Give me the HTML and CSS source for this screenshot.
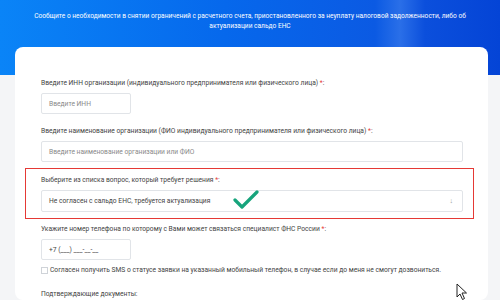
FILE: index.html
```html
<!DOCTYPE html>
<html lang="ru">
<head>
    <meta charset="UTF-8">
    <title>Обращение</title>
    <link rel="stylesheet" href="styles.css">
</head>
<body>
    <div class="hero">
        <p class="hero-text">Сообщите о необходимости в снятии ограничений с расчетного счета, приостановленного за неуплату налоговой задолженности, либо об актуализации сальдо ЕНС</p>
    </div>
    <div class="card">
        <div class="field">
            <label class="label">Введите ИНН организации (индивидуального предпринимателя или физического лица) <span class="req">*</span>:</label>
            <div class="input short placeholder">Введите ИНН</div>
        </div>
        <div class="field">
            <label class="label">Введите наименование организации (ФИО индивидуального предпринимателя или физического лица) <span class="req">*</span>:</label>
            <div class="input placeholder">Введите наименование организации или ФИО</div>
        </div>
        <div class="field highlight">
            <label class="label">Выберите из списка вопрос, который требует решения <span class="req">*</span>:</label>
            <div class="input select">
                <span>Не согласен с сальдо ЕНС, требуется актуализация</span>
                <span class="arrow">↓</span>
                <svg class="check" width="26" height="20" viewBox="0 0 26 20">
                    <path d="M2 10 L9 17 L24 2" fill="none" stroke="#17a47c" stroke-width="3.2" stroke-linecap="round" stroke-linejoin="round"/>
                </svg>
            </div>
        </div>
        <div class="field phone">
            <label class="label">Укажите номер телефона по которому с Вами может связаться специалист ФНС России <span class="req">*</span>:</label>
            <div class="input short">+7 (___) ___-__-__</div>
        </div>
        <div class="agree">
            <span class="box"></span>
            <span>Согласен получить SMS о статусе заявки на указанный мобильный телефон, в случае если до меня не смогут дозвониться.</span>
        </div>
        <div class="label docs">Подтверждающие документы:</div>
        <svg class="cursor" width="12" height="18" viewBox="0 0 12 18">
            <path d="M1 1 L1 14 L4 11 L6.5 16.5 L8.5 15.5 L6 10 L10.5 10 Z" fill="#fff" stroke="#222" stroke-width="1" stroke-linejoin="round"/>
        </svg>
    </div>
</body>
</html>
```

FILE: styles.css
```css
body {
    margin: 0;
    padding: 0;
    font-family: Roboto, "Liberation Sans", sans-serif;
    background-color: #f4f5f7;
    color: #333;
    overflow: hidden;
}

.hero {
    height: 75px;
    background: linear-gradient(90deg, #0a84f7 0%, #0668ec 45%, #0b5ae3 75%, #2a6fe8 80%, #0b4fdc 85%, #0444d6 100%);
    padding-top: 11px;
    box-sizing: border-box;
}

.hero-text {
    margin: 0 auto;
    width: 450px;
    text-align: center;
    color: #fff;
    font-size: 6.6px;
    line-height: 10px;
}

.card {
    position: relative;
    background-color: #fff;
    margin: -28px 12px 0 15px;
    border-radius: 8px;
    padding: 31px 25px 0 26px;
    height: 222px;
}

.field {
    margin-bottom: 12px;
}

.label {
    display: block;
    font-size: 6.7px;
    line-height: 10px;
    color: #444;
    margin-bottom: 5px;
}

.req {
    color: #e53935;
}

.input {
    box-sizing: border-box;
    height: 21px;
    border: 1px solid #e1e4e8;
    border-radius: 2px;
    padding: 0 7px;
    display: flex;
    align-items: center;
    font-size: 6.7px;
    color: #444;
}

.input.short {
    width: 90px;
}

.placeholder {
    color: #8a8a8a;
}

.highlight {
    margin: -6px -11px 5px -16px;
    padding: 6px 10px 6px 15px;
    border: 1.5px solid #e53935;
}

.select {
    position: relative;
    height: 22px;
    justify-content: space-between;
}

.arrow {
    color: #999;
    font-size: 7px;
    margin-right: 2px;
}

.check {
    position: absolute;
    left: 191px;
    top: -1px;
}

.phone {
    margin-bottom: 5px;
}

.agree {
    display: flex;
    align-items: center;
    font-size: 6.7px;
    line-height: 10px;
    color: #444;
}

.box {
    width: 5px;
    height: 5px;
    border: 1px solid #cfd3d8;
    margin-right: 2px;
}

.docs {
    margin-top: 14px;
}

.cursor {
    position: absolute;
    left: 441px;
    top: 236px;
}
```
